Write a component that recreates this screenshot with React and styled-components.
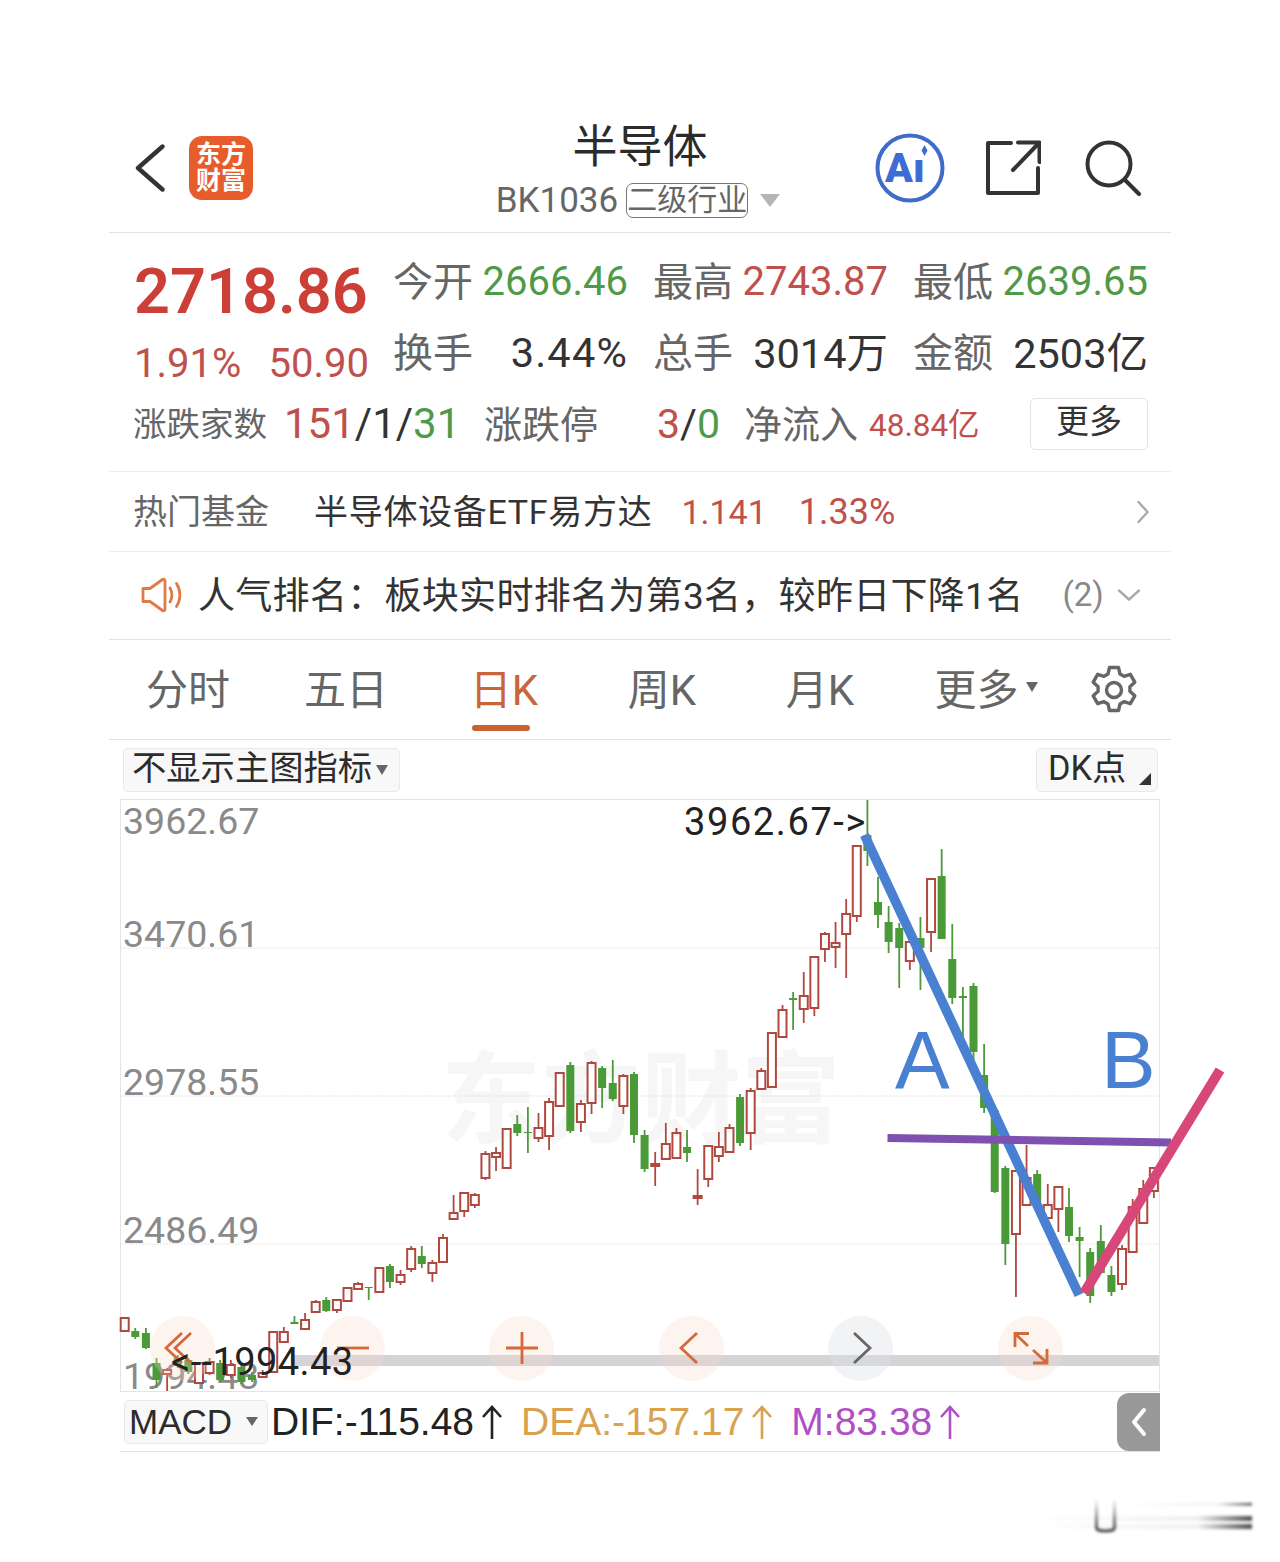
import React from "react";
import styled, { createGlobalStyle } from "styled-components";

const RED = "#c0504b";
const GREEN = "#4f9a48";
const ORANGE = "#d4693a";

const GlobalStyle = createGlobalStyle`
    html, body {
        margin: 0;
        background: #fff;
    }
    body {
        font-family: Roboto, "Noto Sans CJK SC", sans-serif;
    }
`;

const Page = styled.div`
    width: 1280px;
    height: 1562px;
    padding-top: 118px;
    box-sizing: border-box;
    overflow: hidden;
`;

const Panel = styled.div`
    width: 1062px;
    margin-left: 109px;
`;

const Header = styled.div`
    display: grid;
    grid-template-columns: 1fr auto 1fr;
    align-items: center;
    height: 114px;
    border-bottom: 1px solid #e2e2e2;
`;

const HeaderLeft = styled.div`
    display: flex;
    align-items: center;
    gap: 24px;
    padding-left: 26px;
    margin-top: -14px;
`;

const Logo = styled.div`
    width: 64px;
    height: 64px;
    border-radius: 13px;
    background: #e75c2b;
    color: #fff;
    font-size: 25px;
    font-weight: 700;
    line-height: 26px;
    text-align: center;
    display: flex;
    align-items: center;
    justify-content: center;
`;

const HeaderCenter = styled.div`
    align-self: start;
    margin-top: 2px;
    display: flex;
    flex-direction: column;
    align-items: center;
`;

const Title = styled.div`
    font-size: 45px;
    line-height: 56px;
    color: #2b2b2b;
`;

const SubRow = styled.div`
    display: flex;
    align-items: center;
    height: 36px;
    margin: 6px 0 0 -4px;
    color: #666;
`;

const Code = styled.span`
    font-size: 35px;
`;

const Badge = styled.span`
    margin-left: 8px;
    width: 122px;
    height: 35px;
    box-sizing: border-box;
    border: 1px solid #777;
    border-radius: 7px;
    font-size: 30px;
    line-height: 32px;
    text-align: center;
    white-space: nowrap;
`;

const Triangle = styled.span`
    display: inline-block;
    width: 0;
    height: 0;
    border-left: ${(p) => p.$w}px solid transparent;
    border-right: ${(p) => p.$w}px solid transparent;
    border-top: ${(p) => p.$h}px solid ${(p) => p.$color};
    margin-left: ${(p) => p.$ml}px;
    flex: none;
`;

const HeaderRight = styled.div`
    display: flex;
    align-items: center;
    justify-content: flex-end;
    padding-right: 30px;
    margin-top: -15px;
`;

const AiWrap = styled.div`
    margin-right: 40px;
    display: flex;
`;

const ShareWrap = styled.div`
    margin-right: 44px;
    display: flex;
`;

const Quote = styled.div`
    display: flex;
    flex-direction: column;
    padding: 13px 0 12px;
    border-bottom: 1px solid #ededed;
`;

const QuoteTop = styled.div`
    display: flex;
    height: 142px;
`;

const PriceBox = styled.div`
    width: 284px;
    padding-left: 25px;
    box-sizing: border-box;
`;

const BigPrice = styled.div`
    font-size: 63px;
    font-weight: 600;
    line-height: 92px;
    color: #cc3f37;
    white-space: nowrap;
`;

const PriceChange = styled.div`
    display: flex;
    justify-content: space-between;
    font-size: 40px;
    line-height: 52px;
    color: ${RED};
    width: 235px;
`;

const StatGrid = styled.div`
    display: grid;
    grid-template-columns: repeat(3, 235px);
    column-gap: 25px;
    grid-auto-rows: 71px;
`;

const Stat = styled.div`
    display: flex;
    align-items: center;
    justify-content: space-between;
    white-space: nowrap;
`;

const Label = styled.span`
    font-size: ${(p) => p.$size || 40}px;
    color: #666;
    white-space: nowrap;
    margin-bottom: 5px;
`;

const Value = styled.span`
    font-size: ${(p) => p.$size || 40}px;
    letter-spacing: ${(p) => p.$ls || 0}px;
    margin-bottom: ${(p) => p.$mb || 0}px;
    color: ${(p) => p.$color || "#333"};
    white-space: nowrap;
`;

const BreadthRow = styled.div`
    display: grid;
    grid-template-columns: 151px 200px 173px 87px 125px 161px 118px;
    height: 71px;
    align-items: center;
    padding-left: 24px;
`;

const MoreButton = styled.div`
    width: 118px;
    height: 52px;
    box-sizing: border-box;
    border: 1px solid #e3e3e3;
    border-radius: 5px;
    font-size: 33px;
    line-height: 46px;
    text-align: center;
    color: #333;
`;

const FundRow = styled.div`
    display: flex;
    align-items: center;
    height: 79px;
    padding: 0 22px 0 24px;
    border-bottom: 1px solid #ededed;
    font-size: 34px;
    white-space: nowrap;
`;

const FundName = styled.span`
    margin-left: 45px;
    margin-bottom: 5px;
    color: #333;
    letter-spacing: 0.7px;
`;

const FundNumber = styled.span`
    color: ${RED};
    margin-left: ${(p) => p.$ml}px;
    font-size: ${(p) => p.$size}px;
`;

const Push = styled.span`
    margin-left: auto;
    display: flex;
`;

const RankRow = styled.div`
    display: flex;
    align-items: center;
    height: 88px;
    box-sizing: border-box;
    padding: 0 30px 2px 32px;
    border-bottom: 1px solid #e2e2e2;
    white-space: nowrap;
`;

const RankText = styled.span`
    margin-left: 15px;
    margin-bottom: 4px;
    font-size: 37px;
    letter-spacing: 0.3px;
    color: #333;
`;

const RankCount = styled.span`
    margin-left: 39px;
    font-size: 33px;
    color: #888;
`;

const Tabs = styled.div`
    display: flex;
    align-items: center;
    height: 99px;
    border-bottom: 1px solid #e2e2e2;
`;

const Tab = styled.div`
    position: relative;
    width: 158px;
    height: 100%;
    box-sizing: border-box;
    padding-bottom: 6px;
    display: flex;
    align-items: center;
    justify-content: center;
    font-size: 42px;
    color: ${(p) => (p.$active ? "#c8663a" : "#666")};
`;

const TabLine = styled.span`
    position: absolute;
    left: 47px;
    bottom: 8px;
    width: 58px;
    height: 6px;
    border-radius: 3px;
    background: #c8622f;
`;

const MoreTab = styled(Tab)`
    padding-left: 16px;
`;

const GearCell = styled.div`
    flex: 1;
    display: flex;
    justify-content: center;
    color: #666;
`;

const IndicatorBar = styled.div`
    display: flex;
    align-items: center;
    justify-content: space-between;
    height: 59px;
    padding: 0 13px 0 14px;
`;

const SelectBox = styled.div`
    display: flex;
    align-items: center;
    height: 44px;
    box-sizing: border-box;
    padding-left: ${(p) => p.$pl}px;
    width: ${(p) => p.$w}px;
    background: #f8f8f8;
    border: 1px solid #e9e9e9;
    border-radius: 5px;
    font-size: 34.300px;
    line-height: 38px;
    color: #2c2c2c;
    white-space: nowrap;
    position: relative;
`;

const SelectText = styled.span`
    margin-bottom: 4px;
`;

const CornerMark = styled.span`
    position: absolute;
    right: 6px;
    bottom: 6px;
    width: 0;
    height: 0;
    border-left: 12px solid transparent;
    border-bottom: 12px solid #333;
`;

const Chart = styled.div`
    position: relative;
    width: 1040px;
    height: 593px;
    margin-left: 11px;
    box-sizing: border-box;
    border: 1px solid #e4e4e4;
`;

const ChartSvg = styled.svg`
    position: absolute;
    left: -1px;
    top: -1px;
    overflow: visible;
`;

const Watermark = styled.div`
    position: absolute;
    left: 320px;
    top: 241px;
    font-size: 100px;
    font-weight: 700;
    line-height: 120px;
    color: #f6f6f6;
    white-space: nowrap;
`;

const AxisLabel = styled.span`
    position: absolute;
    left: 2px;
    top: ${(p) => p.$top}px;
    font-size: 37.5px;
    line-height: 44px;
    color: #8a8a8a;
`;

const ExtremeLabel = styled.span`
    position: absolute;
    left: ${(p) => p.$left}px;
    top: ${(p) => p.$top}px;
    font-size: 38px;
    line-height: 44px;
    letter-spacing: ${(p) => p.$ls}px;
    color: #222;
    white-space: nowrap;
`;

const ScrollBar = styled.div`
    position: absolute;
    left: 170px;
    right: 0;
    top: 555px;
    height: 11px;
    background: rgba(200, 200, 206, 0.8);
`;

const ZoomBar = styled.div`
    position: absolute;
    left: 29px;
    width: 913px;
    top: 516px;
    display: flex;
    justify-content: space-between;
`;

const ZoomButton = styled.div`
    width: 65px;
    height: 65px;
    border-radius: 50%;
    background: ${(p) => (p.$muted ? "rgba(225,226,228,0.42)" : "rgba(247,216,196,0.28)")};
    color: ${(p) => (p.$muted ? "#666" : ORANGE)};
`;

const WaveLetter = styled.span`
    position: absolute;
    left: ${(p) => p.$left}px;
    top: 210px;
    font-family: "Liberation Sans", sans-serif;
    font-size: 82px;
    line-height: 100px;
    color: #4a80d2;
`;

const MacdRow = styled.div`
    display: flex;
    align-items: center;
    width: 1040px;
    height: 60px;
    margin-left: 11px;
    box-sizing: border-box;
    padding-left: 4px;
    border-bottom: 1px solid #e2e2e2;
    font-family: "Liberation Sans", sans-serif;
    font-size: 39px;
    white-space: nowrap;
`;

const MacdSelect = styled(SelectBox)`
    margin-right: 3px;
    font-size: 35px;
`;

const MacdValue = styled.span`
    display: flex;
    align-items: center;
    gap: 7px;
    color: ${(p) => p.$color};
    margin-left: ${(p) => p.$ml}px;
`;

const Collapse = styled.div`
    margin-left: auto;
    width: 43px;
    height: 58px;
    background: #999;
    border-radius: 12px 0 0 12px;
    display: flex;
    align-items: center;
    justify-content: center;
`;

const Footer = styled.div`
    margin: 44px 0 0 1016px;
    display: flex;
`;

// body top, body bottom, wick top, wick bottom, u = hollow red, d = solid green (page y coords)
const CANDLES = [
    [1318, 1331, 1318, 1331, "u"], [1331, 1337, 1328, 1339, "d"], [1333, 1348, 1328, 1349, "d"],
    [1363, 1380, 1358, 1388, "d"], [1370, 1374, 1368, 1391, "u"], [1358, 1366, 1355, 1368, "d"],
    [1360, 1372, 1358, 1374, "d"], [1363, 1383, 1363, 1383, "u"], [1362, 1373, 1358, 1375, "u"],
    [1363, 1380, 1360, 1382, "d"], [1365, 1375, 1360, 1378, "u"], [1367, 1382, 1363, 1384, "d"],
    [1375, 1380, 1372, 1382, "d"], [1373, 1377, 1370, 1378, "u"], [1332, 1372, 1332, 1372, "u"],
    [1332, 1342, 1327, 1343, "u"], [1322, 1324, 1316, 1324, "d"], [1320, 1329, 1313, 1330, "u"],
    [1302, 1312, 1300, 1313, "u"], [1300, 1311, 1297, 1312, "d"], [1300, 1310, 1299, 1313, "u"],
    [1288, 1301, 1288, 1301, "u"], [1284, 1289, 1282, 1290, "u"], [1287, 1288, 1287, 1300, "d"],
    [1268, 1292, 1268, 1292, "u"], [1266, 1282, 1264, 1288, "d"], [1275, 1282, 1270, 1285, "u"],
    [1249, 1269, 1246, 1272, "u"], [1256, 1264, 1246, 1268, "d"], [1263, 1273, 1260, 1282, "u"],
    [1238, 1262, 1234, 1262, "u"], [1213, 1219, 1195, 1213, "u"], [1193, 1211, 1192, 1217, "u"],
    [1195, 1205, 1193, 1208, "u"], [1154, 1178, 1151, 1180, "u"], [1153, 1157, 1147, 1171, "u"],
    [1129, 1168, 1129, 1168, "u"], [1124, 1133, 1115, 1136, "d"], [1132, 1133, 1107, 1153, "d"],
    [1128, 1138, 1113, 1142, "u"], [1102, 1136, 1098, 1150, "u"], [1073, 1106, 1073, 1106, "u"],
    [1065, 1131, 1062, 1133, "d"], [1104, 1122, 1100, 1132, "u"], [1063, 1103, 1061, 1114, "u"],
    [1068, 1088, 1066, 1108, "d"], [1083, 1099, 1060, 1101, "d"], [1076, 1106, 1074, 1114, "u"],
    [1074, 1135, 1072, 1143, "d"], [1135, 1169, 1130, 1172, "d"], [1164, 1166, 1152, 1186, "u"],
    [1144, 1159, 1123, 1159, "u"], [1133, 1158, 1128, 1158, "u"], [1147, 1153, 1130, 1162, "d"],
    [1196, 1198, 1169, 1205, "u"], [1146, 1179, 1146, 1187, "u"], [1147, 1156, 1132, 1162, "u"],
    [1128, 1152, 1124, 1152, "u"], [1097, 1143, 1094, 1146, "d"], [1091, 1133, 1088, 1150, "u"],
    [1071, 1089, 1068, 1089, "u"], [1033, 1087, 1033, 1087, "u"], [1010, 1037, 1005, 1037, "u"],
    [998, 1000, 992, 1030, "d"], [996, 1009, 972, 1023, "u"], [957, 1008, 957, 1016, "u"],
    [934, 949, 932, 962, "u"], [943, 947, 922, 968, "u"], [914, 934, 899, 978, "u"],
    [846, 916, 846, 922, "u"], [835, 851, 800, 866, "d"], [902, 915, 877, 928, "d"],
    [922, 942, 906, 953, "d"], [928, 948, 923, 988, "d"], [942, 961, 923, 970, "u"],
    [938, 948, 917, 990, "d"], [879, 932, 879, 952, "u"], [876, 939, 849, 939, "d"],
    [959, 998, 924, 1004, "d"], [996, 998, 987, 1040, "d"], [986, 1052, 983, 1063, "d"],
    [1075, 1108, 1044, 1113, "d"], [1110, 1192, 1105, 1193, "d"], [1168, 1244, 1166, 1265, "d"],
    [1171, 1234, 1171, 1297, "u"], [1178, 1205, 1145, 1205, "u"], [1174, 1207, 1170, 1207, "d"],
    [1205, 1218, 1184, 1218, "u"], [1187, 1209, 1187, 1232, "u"], [1207, 1236, 1188, 1242, "d"],
    [1237, 1241, 1227, 1277, "d"], [1252, 1296, 1248, 1303, "d"], [1241, 1273, 1225, 1273, "d"],
    [1275, 1292, 1266, 1296, "d"], [1249, 1284, 1245, 1290, "u"], [1207, 1252, 1199, 1252, "u"],
    [1189, 1223, 1180, 1223, "u"], [1168, 1191, 1168, 1198, "u"],
];

const candleX = (i) => 124.7 + i * 10.61;

const Candle = ({ data, index }) => {
    const [top, bottom, high, low, kind] = data;
    const x = candleX(index);
    const up = kind === "u";
    const color = up ? "#b0483f" : "#4a9a38";
    return (
        <g>
            <line x1={x} x2={x} y1={high} y2={low} stroke={color} strokeWidth="1.8" />
            {up ? (
                <rect x={x - 4} y={top} width="8" height={bottom - top} fill="#fff" stroke={color} strokeWidth="2" />
            ) : (
                <rect x={x - 4} y={top} width="8" height={bottom - top} fill={color} />
            )}
        </g>
    );
};

const Back = () => (
    <svg width="30" height="48" viewBox="0 0 30 48" fill="none" stroke="#333" strokeWidth="4.4" strokeLinecap="round" strokeLinejoin="round">
        <path d="M27.5 2.5 3 24l24.5 21.5" />
    </svg>
);

const AiIcon = () => (
    <svg width="70" height="70" viewBox="0 0 70 70">
        <circle cx="35" cy="35" r="32.5" fill="#fff" stroke="#3f6cc9" strokeWidth="4" />
        <text x="10" y="49" fontFamily="Roboto, sans-serif" fontSize="41" fontWeight="900" fill="#3f6cd4">Aı</text>
        <path d="M49.5 12l3 5.500 -3 5.500 -3 -5.500z" fill="#3f6cd4" />
    </svg>
);

const Share = () => (
    <svg width="56" height="56" viewBox="0 0 56 56" fill="none" stroke="#333" strokeWidth="4" strokeLinejoin="round" strokeLinecap="round">
        <path d="M26 3H3v50h50V28" />
        <path d="M28 30 54 3" />
        <path d="M33 2.5h21.5V22" />
    </svg>
);

const Search = () => (
    <svg width="56" height="56" viewBox="0 0 56 56" fill="none" stroke="#333" strokeWidth="4" strokeLinecap="round">
        <circle cx="24" cy="24" r="21.5" />
        <path d="M39.5 39.5 54 54" />
    </svg>
);

const ChevronRight = () => (
    <svg width="12" height="24" viewBox="0 0 12 24" fill="none" stroke="#aaa" strokeWidth="2.4" strokeLinecap="round" strokeLinejoin="round">
        <path d="M1.5 2 10.5 12 1.5 22" />
    </svg>
);

const ChevronDown = () => (
    <svg width="24" height="12" viewBox="0 0 24 12" fill="none" stroke="#aaa" strokeWidth="2.4" strokeLinecap="round" strokeLinejoin="round">
        <path d="M2 1.5 12 10.5 22 1.5" />
    </svg>
);

const Speaker = () => (
    <svg width="42" height="36" viewBox="0 0 42 36" fill="none" stroke="#e07a45" strokeWidth="2.8" strokeLinejoin="round" strokeLinecap="round">
        <path d="M2 11.5h7L21.5 2.5c1.5-.8 2.5 0 2.5 1.5v28c0 1.500-1 2.300-2.500 1.500L9 24.500H2z" />
        <path d="M29 11c2.500 4 2.500 10 0 14" />
        <path d="M35.500 6.500c4.500 7 4.500 16 0 23" />
    </svg>
);

const Gear = () => (
    <svg width="50" height="50" viewBox="0 0 50 50" fill="none" stroke="currentColor" strokeWidth="3.4" strokeLinejoin="round">
        <path d="M20.500 2.500h9l1.500 6.500 4 2.300 6.300-2 4.500 7.900-4.900 4.500v4.600l4.900 4.500-4.500 7.900-6.300-2-4 2.300-1.500 6.500h-9l-1.500-6.500-4-2.300-6.300 2-4.500-7.900 4.900-4.500v-4.600l-4.900-4.500 4.500-7.900 6.300 2 4-2.300z" />
        <circle cx="25" cy="25" r="7.500" />
    </svg>
);

const UpArrow = ({ color }) => (
    <svg width="22" height="34" viewBox="0 0 22 34" fill="none" stroke={color} strokeWidth="2.6">
        <path d="M11 34V2M2 12 11 2l9 10" />
    </svg>
);

const ZOOM_ICONS = [
    { d: "M32 17 16 32l16 15M41 17 25 32l16 15" },
    { d: "M17 32h32" },
    { d: "M17 32h32M33 16v32" },
    { d: "M38 17 22 32l16 15" },
    { d: "M26 17l16 15-16 15", muted: true },
    { d: "M17 31V17.500h14M17 17.500 30 30M49 33v14H35M49 47 35 34" },
];

const ZoomIcon = ({ d }) => (
    <svg width="65" height="65" viewBox="0 0 65 65" fill="none" stroke="currentColor" strokeWidth="2.800">
        <path d={d} />
    </svg>
);

const Blur = () => (
    <svg width="240" height="42" viewBox="0 0 240 42">
        <defs>
            <linearGradient id="fade" x1="0" x2="1" y1="0" y2="0">
                <stop offset="0" stopColor="#000" stopOpacity="0" />
                <stop offset="0.75" stopColor="#000" stopOpacity="0.06" />
                <stop offset="1" stopColor="#000" stopOpacity="0.7" />
            </linearGradient>
            <linearGradient id="down" x1="0" x2="0" y1="0" y2="1">
                <stop offset="0" stopColor="#000" stopOpacity="0.03" />
                <stop offset="1" stopColor="#000" stopOpacity="0.85" />
            </linearGradient>
            <filter id="soft"><feGaussianBlur stdDeviation="1.600" /></filter>
        </defs>
        <g filter="url(#soft)">
            <rect x="100" y="7" width="136" height="2.500" fill="url(#fade)" />
            <rect x="20" y="20" width="216" height="5" fill="url(#fade)" />
            <rect x="20" y="28" width="216" height="5" fill="url(#fade)" />
            <path d="M80.500 4v28c0 4 18 4 18 0V4" fill="none" stroke="url(#down)" strokeWidth="2.600" />
        </g>
    </svg>
);

const TABS = ["分时", "五日", "日K", "周K", "月K"];
const AXIS = [
    { text: "3962.67", top: -1 },
    { text: "3470.61", top: 112 },
    { text: "2978.55", top: 260 },
    { text: "2486.49", top: 408 },
    { text: "1994.43", top: 554 },
];

const App = () => (
    <Page>
        <GlobalStyle />
        <Panel>
            <Header>
                <HeaderLeft>
                    <Back />
                    <Logo>东方<br />财富</Logo>
                </HeaderLeft>
                <HeaderCenter>
                    <Title>半导体</Title>
                    <SubRow>
                        <Code>BK1036</Code>
                        <Badge>二级行业</Badge>
                        <Triangle $w={10} $h={13} $color="#b5b5b5" $ml={12} />
                    </SubRow>
                </HeaderCenter>
                <HeaderRight>
                    <AiWrap><AiIcon /></AiWrap>
                    <ShareWrap><Share /></ShareWrap>
                    <Search />
                </HeaderRight>
            </Header>

            <Quote>
                <QuoteTop>
                    <PriceBox>
                        <BigPrice>2718.86</BigPrice>
                        <PriceChange><span>1.91%</span><span>50.90</span></PriceChange>
                    </PriceBox>
                    <StatGrid>
                        <Stat><Label>今开</Label><Value $color={GREEN}>2666.46</Value></Stat>
                        <Stat><Label>最高</Label><Value $color={RED}>2743.87</Value></Stat>
                        <Stat><Label>最低</Label><Value $color={GREEN}>2639.65</Value></Stat>
                        <Stat><Label>换手</Label><Value $size={41.5} $ls={1.2}>3.44%</Value></Stat>
                        <Stat><Label>总手</Label><Value $size={41.5} $mb={5}>3014万</Value></Stat>
                        <Stat><Label>金额</Label><Value $size={41.5} $mb={5}>2503亿</Value></Stat>
                    </StatGrid>
                </QuoteTop>
                <BreadthRow>
                    <Label $size={33.5}>涨跌家数</Label>
                    <Value $size={42}>
                        <Value $size={42} $color={RED}>151</Value>/1/<Value $size={42} $color={GREEN}>31</Value>
                    </Value>
                    <Label $size={38}>涨跌停</Label>
                    <Value $size={41}>
                        <Value $size={41} $color={RED}>3</Value>/<Value $size={41} $color={GREEN}>0</Value>
                    </Value>
                    <Label $size={38}>净流入</Label>
                    <Value $size={31.5} $mb={4} $color={RED}>48.84亿</Value>
                    <MoreButton>更多</MoreButton>
                </BreadthRow>
            </Quote>

            <FundRow>
                <Label $size={34}>热门基金</Label>
                <FundName>半导体设备ETF易方达</FundName>
                <FundNumber $ml={29} $size={34}>1.141</FundNumber>
                <FundNumber $ml={32} $size={36}>1.33%</FundNumber>
                <Push><ChevronRight /></Push>
            </FundRow>

            <RankRow>
                <Speaker />
                <RankText>人气排名：板块实时排名为第3名，较昨日下降1名</RankText>
                <RankCount>(2)</RankCount>
                <Push><ChevronDown /></Push>
            </RankRow>

            <Tabs>
                {TABS.map((t) => (
                    <Tab key={t} $active={t === "日K"}>
                        {t}
                        {t === "日K" && <TabLine />}
                    </Tab>
                ))}
                <MoreTab>
                    更多
                    <Triangle $w={6.5} $h={10} $color="#666" $ml={7} />
                </MoreTab>
                <GearCell><Gear /></GearCell>
            </Tabs>

            <IndicatorBar>
                <SelectBox $w={277} $pl={8}>
                    <SelectText>不显示主图指标</SelectText>
                    <Triangle $w={6} $h={10} $color="#666" $ml={4} />
                </SelectBox>
                <SelectBox $w={122} $pl={11}>
                    <SelectText>DK点</SelectText>
                    <CornerMark />
                </SelectBox>
            </IndicatorBar>

            <Chart>
                <Watermark>东方财富</Watermark>
                {AXIS.map((a) => (
                    <AxisLabel key={a.text} $top={a.top}>{a.text}</AxisLabel>
                ))}
                <ChartSvg width="1040" height="593" viewBox="120 799 1040 593">
                    {[948, 1096, 1244].map((y) => (
                        <line key={y} x1="121" x2="1159" y1={y} y2={y} stroke="#e4e4e4" strokeWidth="1" strokeDasharray="2 1" />
                    ))}
                    {CANDLES.map((c, i) => (
                        <Candle key={i} data={c} index={i} />
                    ))}
                </ChartSvg>
                <ScrollBar />
                <ZoomBar>
                    {ZOOM_ICONS.map((z) => (
                        <ZoomButton key={z.d} $muted={z.muted}><ZoomIcon d={z.d} /></ZoomButton>
                    ))}
                </ZoomBar>
                <ExtremeLabel $left={563} $top={0} $ls={1.6}>3962.67-&gt;</ExtremeLabel>
                <ExtremeLabel $left={50} $top={540} $ls={0.4}>&lt;--1994.43</ExtremeLabel>
                <WaveLetter $left={774}>A</WaveLetter>
                <WaveLetter $left={980}>B</WaveLetter>
                <ChartSvg width="1040" height="593" viewBox="120 799 1040 593">
                    <line x1="864.500" y1="835" x2="1079" y2="1295" stroke="#4a80d2" strokeWidth="9.500" />
                    <line x1="887.500" y1="1138" x2="1171" y2="1142.500" stroke="#7e50b0" strokeWidth="8" />
                    <line x1="1084" y1="1293" x2="1220" y2="1070" stroke="#d8477a" strokeWidth="10" />
                </ChartSvg>
            </Chart>

            <MacdRow>
                <MacdSelect $w={144} $pl={4}>
                    MACD
                    <Triangle $w={6.5} $h={9} $color="#666" $ml={14} />
                </MacdSelect>
                <MacdValue $color="#222" $ml={0}>DIF:-115.48<UpArrow color="#222" /></MacdValue>
                <MacdValue $color="#d8a24e" $ml={18}>DEA:-157.17<UpArrow color="#d8a24e" /></MacdValue>
                <MacdValue $color="#b04fc6" $ml={18}>M:83.38<UpArrow color="#b04fc6" /></MacdValue>
                <Collapse>
                    <svg width="16" height="30" viewBox="0 0 16 30" fill="none" stroke="#fff" strokeWidth="4" strokeLinecap="round" strokeLinejoin="round">
                        <path d="M13 3 3 15l10 12" />
                    </svg>
                </Collapse>
            </MacdRow>
        </Panel>
        <Footer><Blur /></Footer>
    </Page>
);

export default App;
